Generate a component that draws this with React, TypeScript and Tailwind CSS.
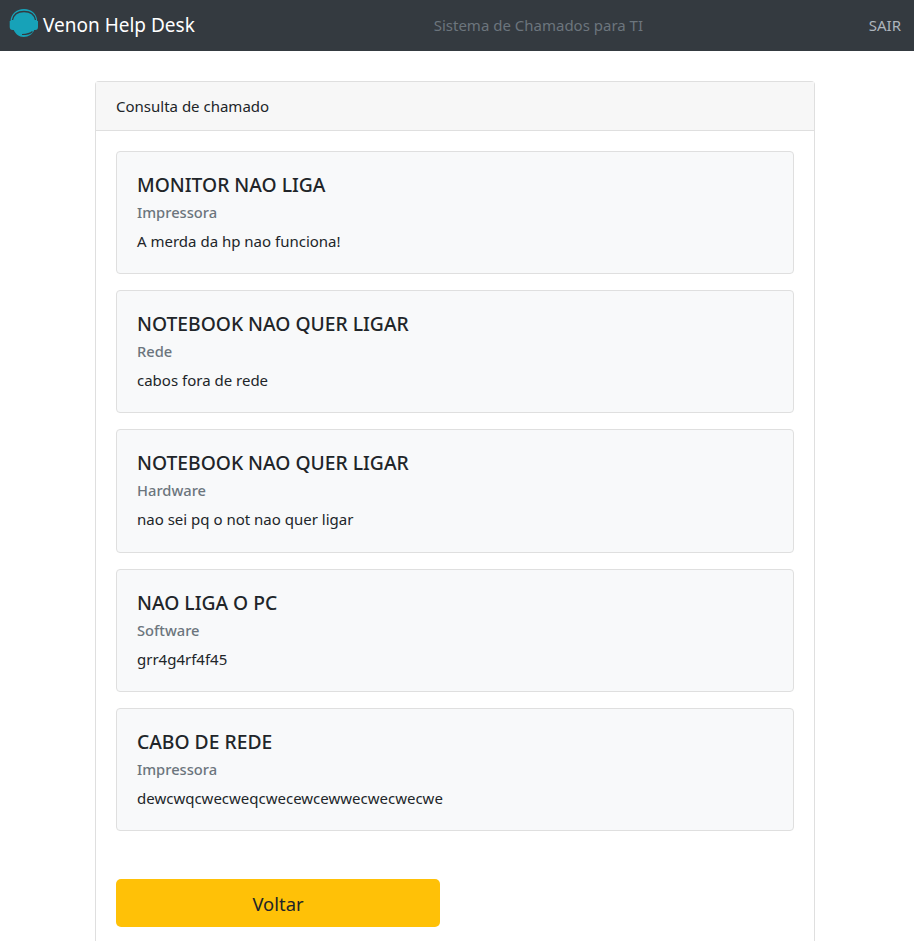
const cards = [
  ["MONITOR NAO LIGA", "Impressora", "A merda da hp nao funciona!"],
  ["NOTEBOOK NAO QUER LIGAR", "Rede", "cabos fora de rede"],
  ["NOTEBOOK NAO QUER LIGAR", "Hardware", "nao sei pq o not nao quer ligar"],
  ["NAO LIGA O PC", "Software", "grr4g4rf4f45"],
  ["CABO DE REDE", "Impressora", "dewcwqcwecweqcwecewcewwecwecwecwe"],
];

export default function App() {
  return (
    <div className="h-[941px] overflow-hidden bg-white font-['Noto_Sans','Open_Sans',sans-serif] text-[#212529]">
      <nav className="flex h-[51px] items-center justify-between bg-[#343a40] pl-[8px] pr-[13px]">
        <div className="flex w-[200px] items-center gap-[5px]">
          <svg width="30" height="30" viewBox="0 0 30 30" className="mb-[5px] shrink-0">
            <path d="M16 1C8 1 3 6 2.5 13H1.7v6c0 2 1 3 3 3h1c2 4 5 7 10 7 5 0 9-3 10.5-7h1c2 0 2.8-1 2.8-3v-6h-.8C29 6 24 1 16 1z" fill="#17a2b8" />
            <path d="M4.5 12C5.5 6.5 10 3.5 16 3.5S26.5 6.5 27.5 12" fill="none" stroke="#343a40" strokeWidth="1.3" />
            <path d="M14 26.5c4 0 8-.5 10.5-3" fill="none" stroke="#343a40" strokeWidth="1.2" />
          </svg>
          <span className="text-[19px] leading-none text-white">Venon Help Desk</span>
        </div>
        <span className="text-[15px] text-[#6c757d]">Sistema de Chamados para TI</span>
        <span className="text-[15px] text-[#adb5bd]">SAIR</span>
      </nav>
      <main className="ml-[95px] mt-[30px] h-[860px] w-[720px] rounded-t-[4px] border border-b-0 border-[#dfdfdf]">
        <div className="flex h-[49px] items-center border-b border-[#dfdfdf] bg-[#f7f7f7] px-[20px] text-[15px]">Consulta de chamado</div>
        <div className="flex flex-col gap-[16px] px-[20px] pt-[19.9px]">
          {cards.map((c, i) => (
            <section key={i} className="h-[123.25px] rounded-[4px] border border-[#dfdfdf] bg-[#f8f9fa] px-[20px] pt-[19px]">
              <h2 className="text-[19.3px] font-medium leading-[27px]">{c[0]}</h2>
              <h3 className="mt-[4px] text-[14.7px] font-medium leading-[21px] text-[#6c757d]">{c[1]}</h3>
              <p className="mt-[8px] text-[15px] leading-[21px]">{c[2]}</p>
            </section>
          ))}
        </div>
        <div className="px-[20px] pt-[48px]">
          <button className="h-[48px] w-[324px] rounded-[5px] bg-[#ffc107] pt-[1px] text-[18.4px]">Voltar</button>
        </div>
      </main>
    </div>
  );
}
